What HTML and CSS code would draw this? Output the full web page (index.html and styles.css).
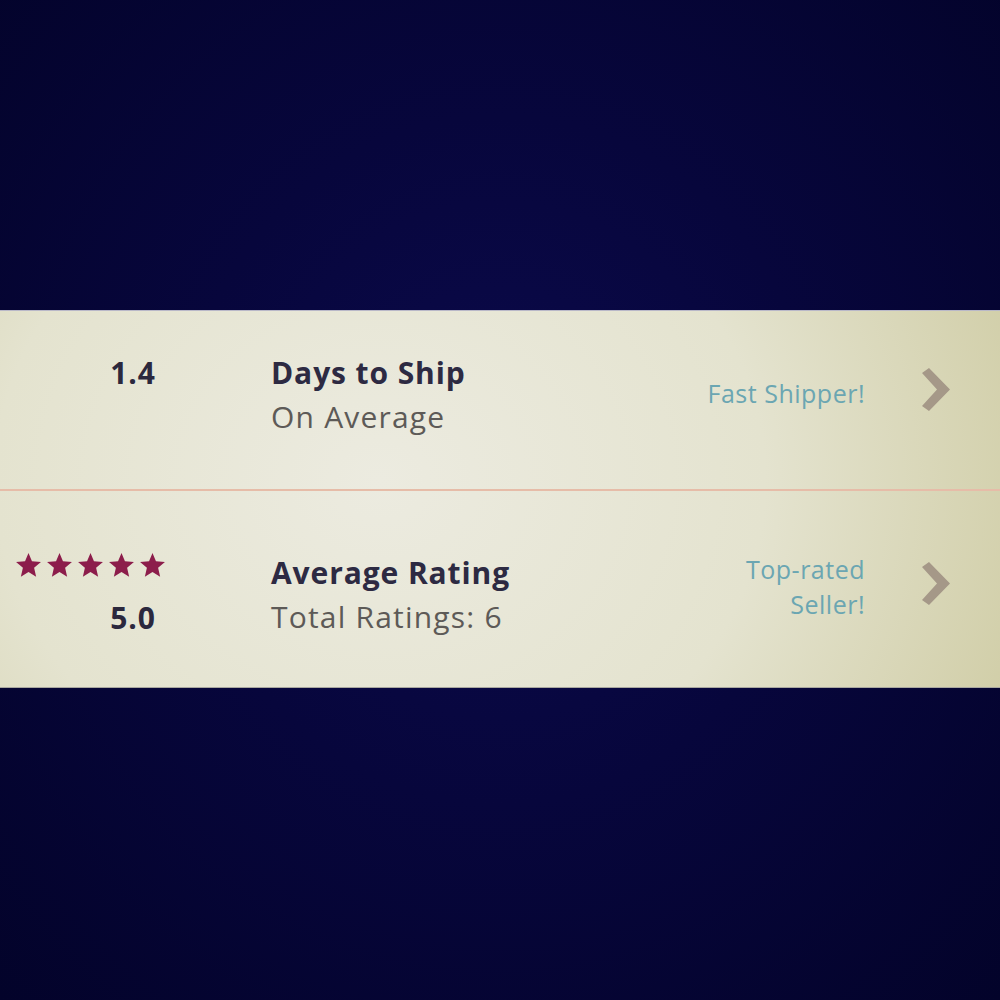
FILE: index.html
```html
<!DOCTYPE html>
<html lang="en">

<head>
    <meta charset="UTF-8">
    <meta name="viewport" content="width=device-width, initial-scale=1.0">
    <title>Shop Stats</title>
    <link rel="stylesheet" href="styles.css">
</head>

<body>
    <main class="stats">
        <!-- Baris pengiriman -->
        <div class="stat-row stat-row-ship">
            <div class="stat-value">
                <span class="stat-number">1.4</span>
            </div>
            <div class="stat-info">
                <div class="stat-title">Days to Ship</div>
                <div class="stat-sub">On Average</div>
            </div>
            <div class="stat-badge">Fast Shipper!</div>
            <svg class="chevron" viewBox="0 0 28 43" width="28" height="43">
                <polygon points="0,5 7,0 28,21.5 7,43 0,38 15,21.5" />
            </svg>
        </div>

        <div class="divider"></div>

        <!-- Baris rating -->
        <div class="stat-row stat-row-rating">
            <div class="stat-value">
                <div class="stars">
                    <svg viewBox="0 0 28 27"><polygon points="14,0 17.9,9.4 28,10.2 20.3,16.7 22.6,26.6 14,21.3 5.4,26.6 7.7,16.7 0,10.2 10.1,9.4" /></svg>
                    <svg viewBox="0 0 28 27"><polygon points="14,0 17.9,9.4 28,10.2 20.3,16.7 22.6,26.6 14,21.3 5.4,26.6 7.7,16.7 0,10.2 10.1,9.4" /></svg>
                    <svg viewBox="0 0 28 27"><polygon points="14,0 17.9,9.4 28,10.2 20.3,16.7 22.6,26.6 14,21.3 5.4,26.6 7.7,16.7 0,10.2 10.1,9.4" /></svg>
                    <svg viewBox="0 0 28 27"><polygon points="14,0 17.9,9.4 28,10.2 20.3,16.7 22.6,26.6 14,21.3 5.4,26.6 7.7,16.7 0,10.2 10.1,9.4" /></svg>
                    <svg viewBox="0 0 28 27"><polygon points="14,0 17.9,9.4 28,10.2 20.3,16.7 22.6,26.6 14,21.3 5.4,26.6 7.7,16.7 0,10.2 10.1,9.4" /></svg>
                </div>
                <span class="stat-number">5.0</span>
            </div>
            <div class="stat-info">
                <div class="stat-title">Average Rating</div>
                <div class="stat-sub">Total Ratings: 6</div>
            </div>
            <div class="stat-badge">Top-rated<br>Seller!</div>
            <svg class="chevron" viewBox="0 0 28 43" width="28" height="43">
                <polygon points="0,5 7,0 28,21.5 7,43 0,38 15,21.5" />
            </svg>
        </div>
    </main>
</body>

</html>
```

FILE: styles.css
```css
/* Dasar halaman */
html,
body {
    height: 100%;
}

body {
    margin: 0;
    font-family: "Open Sans", Arial, sans-serif;
    background: radial-gradient(ellipse at 50% 46%, #0b0a4c 0%, #07063c 45%, #03032a 100%);
    display: flex;
    flex-direction: column;
    justify-content: center;
}

.stats {
    height: 376px;
    margin-top: -2px;
    background: radial-gradient(ellipse 70% 160% at 38% 45%, #ecebe0 0%, #e4e3cf 55%, #cfcca4 100%);
    box-shadow: 0 -1px 0 #b9b8c8, 0 1px 0 #a9a8a0;
    display: flex;
    flex-direction: column;
}

.stat-row {
    display: grid;
    grid-template-columns: 155px 1fr auto 28px;
    align-items: start;
    padding-right: 50px;
}

.stat-row-ship {
    height: 178px;
}

.stat-row-rating {
    flex: 1;
}

.divider {
    height: 2px;
    background: #e6bca8;
}

/* Kolom angka */
.stat-value {
    text-align: right;
    margin-right: -1px;
}

.stat-row-ship .stat-value {
    padding-top: 40px;
}

.stat-row-rating .stat-value {
    padding-top: 62px;
}

.stat-number {
    font-size: 30px;
    font-weight: bold;
    line-height: 44px;
    letter-spacing: 1px;
    color: #2b283d;
}

.stars {
    display: flex;
    justify-content: flex-end;
    gap: 6px;
    margin-right: -9px;
    margin-bottom: 19px;
}

.stars svg {
    display: block;
    width: 25px;
    height: 24px;
    fill: #8c1d4b;
}

/* Kolom judul */
.stat-info {
    padding-left: 116px;
}

.stat-row-ship .stat-info {
    padding-top: 40px;
}

.stat-row-rating .stat-info {
    padding-top: 60px;
}

.stat-title {
    font-size: 30px;
    font-weight: bold;
    line-height: 44px;
    letter-spacing: 0.9px;
    color: #2d2a42;
}

.stat-sub {
    font-size: 30px;
    line-height: 44px;
    letter-spacing: 1.2px;
    color: #5d5a57;
}

/* Label kanan */
.stat-badge {
    font-size: 25px;
    line-height: 35px;
    letter-spacing: 0.5px;
    color: #6ba6b2;
    text-align: right;
    margin-right: 57px;
}

.stat-row-ship .stat-badge {
    padding-top: 65px;
}

.stat-row-rating .stat-badge {
    padding-top: 61px;
}

.chevron {
    display: block;
    fill: #a59888;
}

.stat-row-ship .chevron {
    margin-top: 57px;
}

.stat-row-rating .chevron {
    margin-top: 71px;
}
```
